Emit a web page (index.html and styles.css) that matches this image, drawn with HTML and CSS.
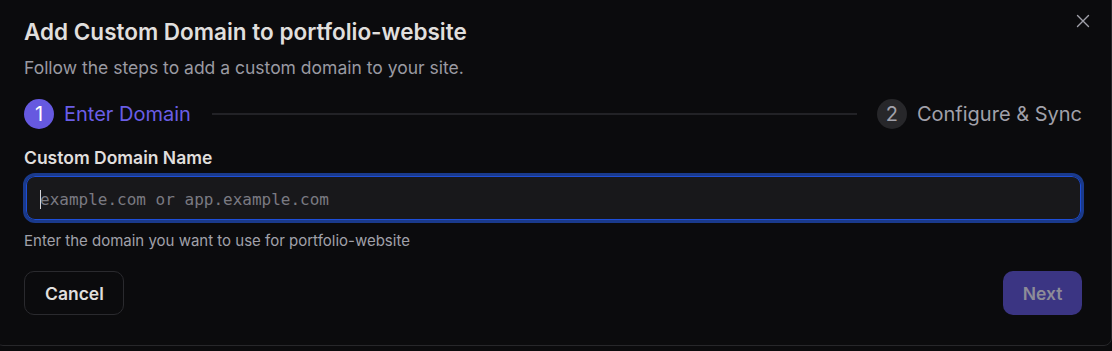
FILE: index.html
```html
<!DOCTYPE html>
<html lang="en">
<head>
<meta charset="utf-8">
<title>Add Custom Domain</title>
<link rel="stylesheet" href="styles.css">
</head>
<body>
<div class="dialog">
  <button class="close" aria-label="Close">
    <svg width="16" height="16" viewBox="0 0 16 16" fill="none" stroke="currentColor" stroke-width="1.4" stroke-linecap="round"><path d="M2.5 2.5l11 11M13.5 2.5l-11 11"/></svg>
  </button>
  <h2 class="title">Add Custom Domain to portfolio-website</h2>
  <p class="subtitle">Follow the steps to add a custom domain to your site.</p>
  <div class="stepper">
    <div class="step active"><span class="num">1</span><span class="label">Enter Domain</span></div>
    <div class="line"></div>
    <div class="step"><span class="num">2</span><span class="label">Configure &amp; Sync</span></div>
  </div>
  <label class="field-label" for="domain">Custom Domain Name</label>
  <div class="input-wrap">
    <span class="caret"></span><input id="domain" class="input" type="text" placeholder="example.com or app.example.com">
  </div>
  <p class="help">Enter the domain you want to use for portfolio-website</p>
  <div class="actions">
    <button class="btn cancel">Cancel</button>
    <button class="btn next" disabled>Next</button>
  </div>
</div>
</body>
</html>
```

FILE: styles.css
```css
* { box-sizing: border-box; }
html, body { margin: 0; padding: 0; background: #0b0b0d; }
body {
  font-family: Inter, "Noto Sans", sans-serif;
  color: #e4e4e7;
  overflow: hidden;
}
.dialog {
  position: relative;
  margin: -10px 0 0 -5px;
  width: 1117px;
  height: 356px;
  background: #0b0b0d;
  border: 1px solid #27272a;
  border-radius: 8px;
  padding: 26px 29px 0 28px;
}
.close {
  position: absolute;
  top: 22px;
  right: 20px;
  width: 16px;
  height: 16px;
  padding: 0;
  border: 0;
  background: none;
  color: #a1a1aa;
  display: flex;
}
.title {
  margin: 0;
  font-size: 22.5px;
  line-height: 30px;
  font-weight: 600;
  color: #e0dfdd;
}
.subtitle {
  margin: 8px 0 0;
  font-size: 17.5px;
  line-height: 26px;
  color: #9a9aa2;
}
.stepper {
  margin-top: 18px;
  display: flex;
  align-items: center;
  height: 30px;
}
.step {
  display: flex;
  align-items: center;
  gap: 10px;
  color: #a1a1aa;
  font-size: 20px;
}
.num {
  width: 30px;
  height: 30px;
  border-radius: 50%;
  background: #27272a;
  color: #a1a1aa;
  display: flex;
  align-items: center;
  justify-content: center;
  font-size: 20px;
}
.step.active { color: #6a5ee6; }
.step.active .num { background: #6659e0; color: #fff; }
.line {
  flex: 1;
  height: 2px;
  background: #222226;
  margin: 0 20px 0 21px;
}
.field-label {
  display: block;
  margin-top: 16px;
  font-size: 17.5px;
  line-height: 26px;
  font-weight: 600;
  color: #e0dfdd;
}
.input-wrap {
  position: relative;
  margin-top: 2px;
  height: 50px;
  width: 1061px;
  margin-left: -1px;
  border-radius: 12px;
  border: 3px solid #1a3a8c;
  background: #18181b;
  box-shadow: inset 0 0 0 1px #1d4ed8;
  display: flex;
  align-items: center;
}
.input {
  flex: 1;
  height: 100%;
  border: 0;
  outline: none;
  background: transparent;
  padding: 2px 0 0 14px;
  font-family: "DejaVu Sans Mono", "Liberation Mono", monospace;
  font-size: 16px;
  color: #e4e4e7;
}
.input::placeholder { color: #7a7a82; }
.caret {
  position: absolute;
  left: 14px;
  top: 14px;
  width: 1px;
  height: 19px;
  background: #d4d4d8;
}
.help {
  margin: 7px 0 0;
  font-size: 15px;
  line-height: 22px;
  color: #a1a1aa;
}
.actions {
  margin-top: 19px;
  display: flex;
  justify-content: space-between;
}
.btn {
  height: 44px;
  border-radius: 10px;
  font-family: Inter, "Noto Sans", sans-serif;
  font-size: 17.5px;
  font-weight: 600;
  padding: 0 20px;
}
.cancel {
  width: 100px;
  background: transparent;
  border: 1px solid #2a2a2e;
  color: #e0dfdd;
}
.next {
  width: 79px;
  background: #3b3583;
  border: 0;
  color: #8d8c98;
  padding: 0;
}
```
